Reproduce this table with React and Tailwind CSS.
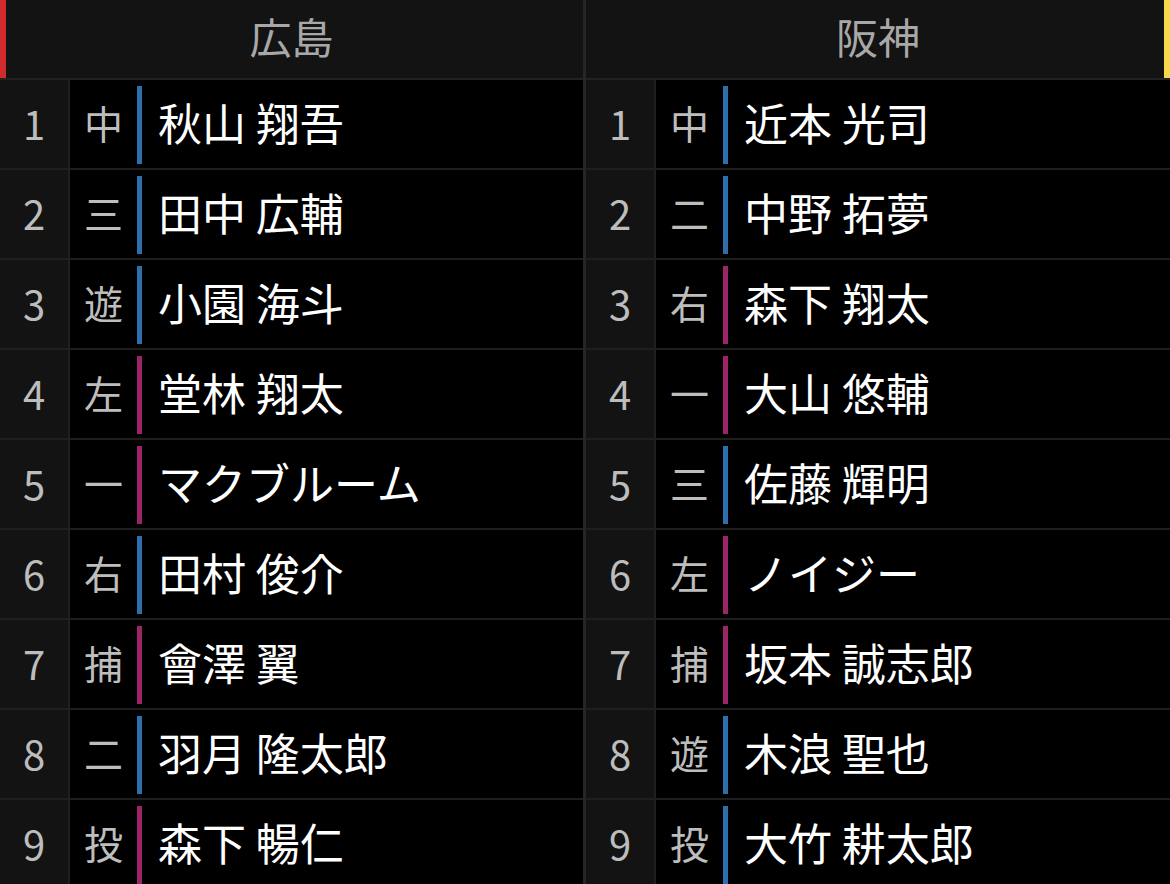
const HOME = {
  name: '広島',
  accent: 'red',
  lineup: [
    ['1', '中', '秋山 翔吾', 'b'],
    ['2', '三', '田中 広輔', 'b'],
    ['3', '遊', '小園 海斗', 'b'],
    ['4', '左', '堂林 翔太', 'm'],
    ['5', '一', 'マクブルーム', 'm'],
    ['6', '右', '田村 俊介', 'b'],
    ['7', '捕', '會澤 翼', 'm'],
    ['8', '二', '羽月 隆太郎', 'b'],
    ['9', '投', '森下 暢仁', 'm'],
  ],
};

const AWAY = {
  name: '阪神',
  accent: 'yellow',
  lineup: [
    ['1', '中', '近本 光司', 'b'],
    ['2', '二', '中野 拓夢', 'b'],
    ['3', '右', '森下 翔太', 'm'],
    ['4', '一', '大山 悠輔', 'm'],
    ['5', '三', '佐藤 輝明', 'b'],
    ['6', '左', 'ノイジー', 'm'],
    ['7', '捕', '坂本 誠志郎', 'm'],
    ['8', '遊', '木浪 聖也', 'b'],
    ['9', '投', '大竹 耕太郎', 'b'],
  ],
};

function Row({ num, pos, name, hand }) {
  return (
    <div className="flex h-[90px] shrink-0 border-b-2 border-[#1f1f1f]">
      <div className="flex w-[70px] shrink-0 items-center justify-center border-r-2 border-[#1f1f1f] bg-[#131313] pb-[2px] text-[40px] text-[#bdbdbd]">
        {num}
      </div>
      <div className="flex w-[67px] shrink-0 items-center justify-center pb-[3px] text-[39px] text-[#bdbdbd]">
        {pos}
      </div>
      <div className="flex flex-1 items-center">
        <div className={`mt-[6px] h-[78px] w-[5px] self-start ${hand === 'b' ? 'bg-[#2e6fae]' : 'bg-[#9e2468]'}`}></div>
        <span className="pb-[4px] pl-[16px] text-[44px] text-white whitespace-nowrap">{name}</span>
      </div>
    </div>
  );
}

function Team({ team, width }) {
  return (
    <div className={`flex flex-col ${width}`}>
      {/* header */}
      <div className="relative flex h-[80px] shrink-0 items-center justify-center border-b-2 border-[#222] bg-[#131313]">
        {team.accent === 'red' && <div className="absolute left-0 top-0 h-[78px] w-[6px] bg-[#d22b2b]"></div>}
        {team.accent === 'yellow' && <div className="absolute right-0 top-0 h-[78px] w-[6px] bg-[#f7d84a]"></div>}
        <span className="pb-[8px] text-[42px] text-[#a8a8a8]">{team.name}</span>
      </div>
      {team.lineup.map((r) => (
        <Row key={r[0]} num={r[0]} pos={r[1]} name={r[2]} hand={r[3]} />
      ))}
    </div>
  );
}

export default function App() {
  return (
    <div
      className="flex h-[884px] w-[1170px] overflow-hidden bg-black"
      style={{ fontFamily: '"Noto Sans CJK JP", "Noto Sans", sans-serif' }}
    >
      <Team team={HOME} width="w-[583px]" />
      <div className="w-[3px] shrink-0 bg-[#262626]"></div>
      <Team team={AWAY} width="flex-1" />
    </div>
  );
}
